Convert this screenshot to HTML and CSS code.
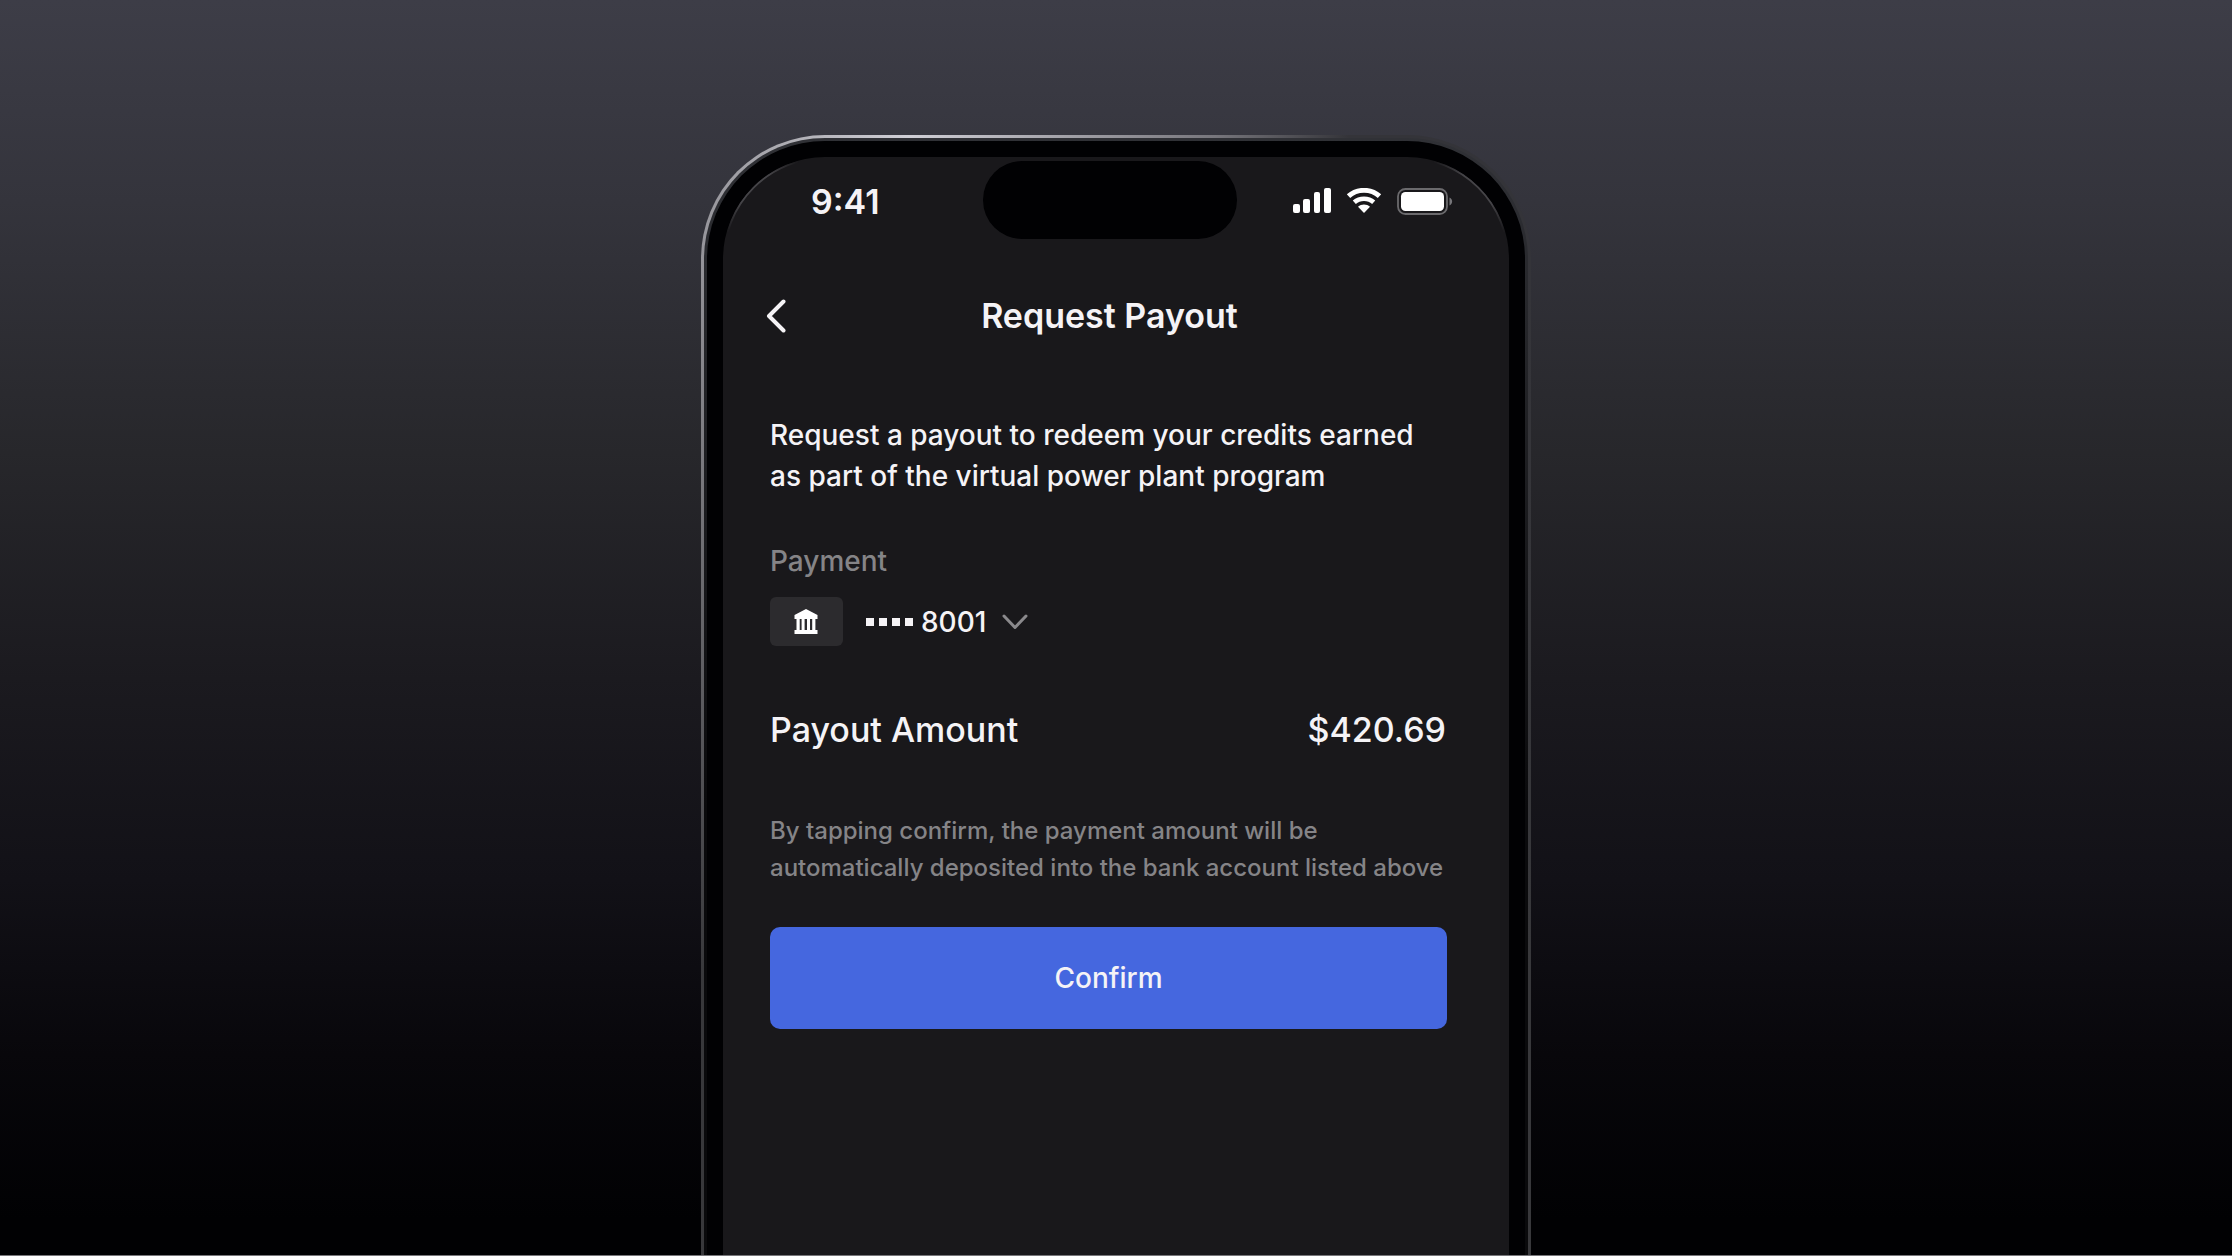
FILE: index.html
```html
<!DOCTYPE html>
<html lang="en">
<head>
<meta charset="utf-8">
<meta name="viewport" content="width=device-width, initial-scale=1">
<title>Request Payout</title>
<link rel="stylesheet" href="styles.css">
</head>
<body>
<div class="phone">
  <div class="rim">
    <div class="bezel">
      <main class="screen">
        <div class="status-bar">
          <span class="time">9:41</span>
          <span class="island"></span>
          <span class="indicators">
            <svg class="signal" width="38" height="26" viewBox="0 0 38 26" fill="#fff" aria-hidden="true">
              <rect x="0" y="16" width="7" height="9" rx="2"/><rect x="10" y="11" width="7" height="14" rx="2"/><rect x="21" y="4" width="6" height="21" rx="2"/><rect x="31" y="0" width="7" height="25" rx="2"/>
            </svg>
            <svg class="wifi" width="36" height="26" viewBox="0 0 36 26" aria-hidden="true">
              <path d="M2.5 8.2C11 .4 25 .4 33.5 8.2" fill="none" stroke="#fff" stroke-width="5"/>
              <path d="M8.300 14.300C13.600 9.500 22.400 9.500 27.700 14.300" fill="none" stroke="#fff" stroke-width="4.600"/>
              <path d="M12 18.800C15.400 15.800 20.600 15.800 24 18.800L18 25Z" fill="#fff"/>
            </svg>
            <svg class="battery" width="56" height="27" viewBox="0 0 56 27" aria-hidden="true">
              <rect x="1" y="1" width="49" height="25" rx="7.5" fill="none" stroke="#6b6a6d" stroke-width="1.8"/>
              <rect x="4" y="4" width="43" height="19" rx="4.5" fill="#fff"/>
              <path d="M52.500 9.500C56 11 56 16 52.500 17.500Z" fill="#77767a"/>
            </svg>
          </span>
        </div>
        <header class="title-bar">
          <button class="back" type="button" aria-label="Back">
            <svg width="20" height="34" viewBox="0 0 20 34" fill="none" stroke="#f5f3f6" stroke-width="4" stroke-linecap="round" stroke-linejoin="round"><path d="M17.500 2.500L3 17L17.500 31.500"/></svg>
          </button>
          <h1>Request Payout</h1>
        </header>
        <section class="content">
          <p class="intro">Request a payout to redeem your credits earned<br>as part of the virtual power plant program</p>
          <h2 class="label" id="payment">Payment</h2>
          <button class="account" type="button" aria-haspopup="listbox" aria-describedby="payment">
            <span class="bank">
              <svg width="24" height="25" viewBox="0 0 24 25" fill="#fff" aria-hidden="true"><path d="M12 0L23.500 6V10H.5V6ZM2.500 10h3.200v11H2.500ZM7.600 10h3v11h-3ZM13 10h3v11h-3ZM18.200 10h3.200v11h-3.200ZM.5 21h23v4H.5Z"/></svg>
            </span>
            <span class="mask"><i></i><i></i><i></i><i></i></span>
            <span class="digits">8001</span>
            <svg width="26" height="16" viewBox="0 0 26 16" fill="none" stroke="#8a898c" stroke-width="3" stroke-linecap="round" stroke-linejoin="round" aria-hidden="true"><path d="M2 2L13 13.500L24 2"/></svg>
          </button>
          <div class="amount"><span>Payout Amount</span><span>$420.69</span></div>
          <p class="notice">By tapping confirm, the payment amount will be<br>automatically deposited into the bank account listed above</p>
          <button class="confirm" type="button">Confirm</button>
        </section>
      </main>
    </div>
  </div>
</div>
</body>
</html>
```
FILE: styles.css
```css
* { box-sizing: border-box; }

body {
  margin: 0;
  min-height: 100vh;
  padding-top: 135px;
  display: flex;
  justify-content: center;
  border-bottom: 1px solid #77767a;
  background: linear-gradient(#3d3d47 0%, #34343c 16%, #27272b 36%, #1b1a1f 54%, #121117 70%, #08070b 84%, #010103 97%);
  font-family: Inter, "Liberation Sans", sans-serif;
  font-weight: 500;
  color: #f5f3f6;
}

h1, h2, p { margin: 0; font-weight: 500; }

button {
  border: 0;
  padding: 0;
  background: none;
  color: inherit;
  font: inherit;
  cursor: pointer;
}

svg { display: block; }

.phone {
  display: flex;
  width: 100%;
  max-width: 830px;
  padding: 3px 3px 0;
  border-radius: 124px 124px 0 0;
  background:
    linear-gradient(transparent 10%, #38383b 75%),
    linear-gradient(90deg, #96959b 0%, #d0cfd6 25%, #77767c 62%, #343439 78%);
}

.rim {
  display: flex;
  flex: 1;
  padding: 3px 3px 0;
  border-radius: 121px 121px 0 0;
  background: linear-gradient(#303136, #0a0a0c 60%);
}

.bezel {
  display: flex;
  flex: 1;
  padding: 16px 16px 0;
  border-radius: 118px 118px 0 0;
  background: #010103;
}

.screen {
  position: relative;
  flex: 1;
  border-radius: 102px 102px 0 0;
  background: #19181b;
}

/* glass highlight that catches the two upper corners */
.screen::before {
  content: "";
  position: absolute;
  inset: 0;
  border: 2px solid #454448;
  border-radius: inherit;
  mask:
    radial-gradient(circle at 30px 30px, #000 20px, transparent 52px) left / 50% no-repeat,
    radial-gradient(circle at calc(100% - 30px) 30px, #000 20px, transparent 52px) right / 50% no-repeat;
  pointer-events: none;
}

.status-bar {
  display: grid;
  grid-template-columns: 1fr 254px 1fr;
  align-items: center;
  padding: 4px 56px 0 43px;
}

.time {
  padding: 3px 0 0 45px;
  font-size: 34px;
  font-weight: 600;
  line-height: 40px;
}

.island {
  height: 78px;
  border-radius: 39px;
  background: #010103;
}

.indicators {
  display: flex;
  justify-content: flex-end;
  gap: 15px;
  padding-top: 2px;
}

.title-bar {
  display: grid;
  grid-template-columns: 20px 1fr 20px;
  align-items: center;
  padding: 54px 56px 0 43px;
}

h1 {
  font-size: 34px;
  font-weight: 600;
  line-height: 46px;
  text-align: center;
}

.content {
  display: flex;
  flex-direction: column;
  padding: 76px 62px 0 47px;
}

.intro { font-size: 28px; line-height: 41px; }

.label {
  margin-top: 44px;
  font-size: 28px;
  line-height: 41px;
  color: #858487;
}

.account {
  display: flex;
  align-items: center;
  align-self: flex-start;
  margin-top: 15px;
  font-size: 28px;
}

.bank {
  display: grid;
  place-items: center;
  width: 73px;
  height: 49px;
  padding-right: 2px;
  border-radius: 6px;
  background: #2c2b2e;
}

.mask {
  display: flex;
  gap: 5px;
  margin: 0 8px 0 23px;
}

.mask i {
  width: 8px;
  height: 8px;
  background: #f5f3f6;
}

.digits { margin-right: 16px; }

.amount {
  display: flex;
  justify-content: space-between;
  margin-top: 61px;
  padding-right: 1px;
  font-size: 34px;
  line-height: 46px;
}

.notice {
  margin-top: 59px;
  font-size: 24px;
  line-height: 37px;
  color: #858487;
}

.confirm {
  height: 102px;
  margin-top: 41px;
  border-radius: 10px;
  background: #4567df;
  font-size: 28px;
}
```
